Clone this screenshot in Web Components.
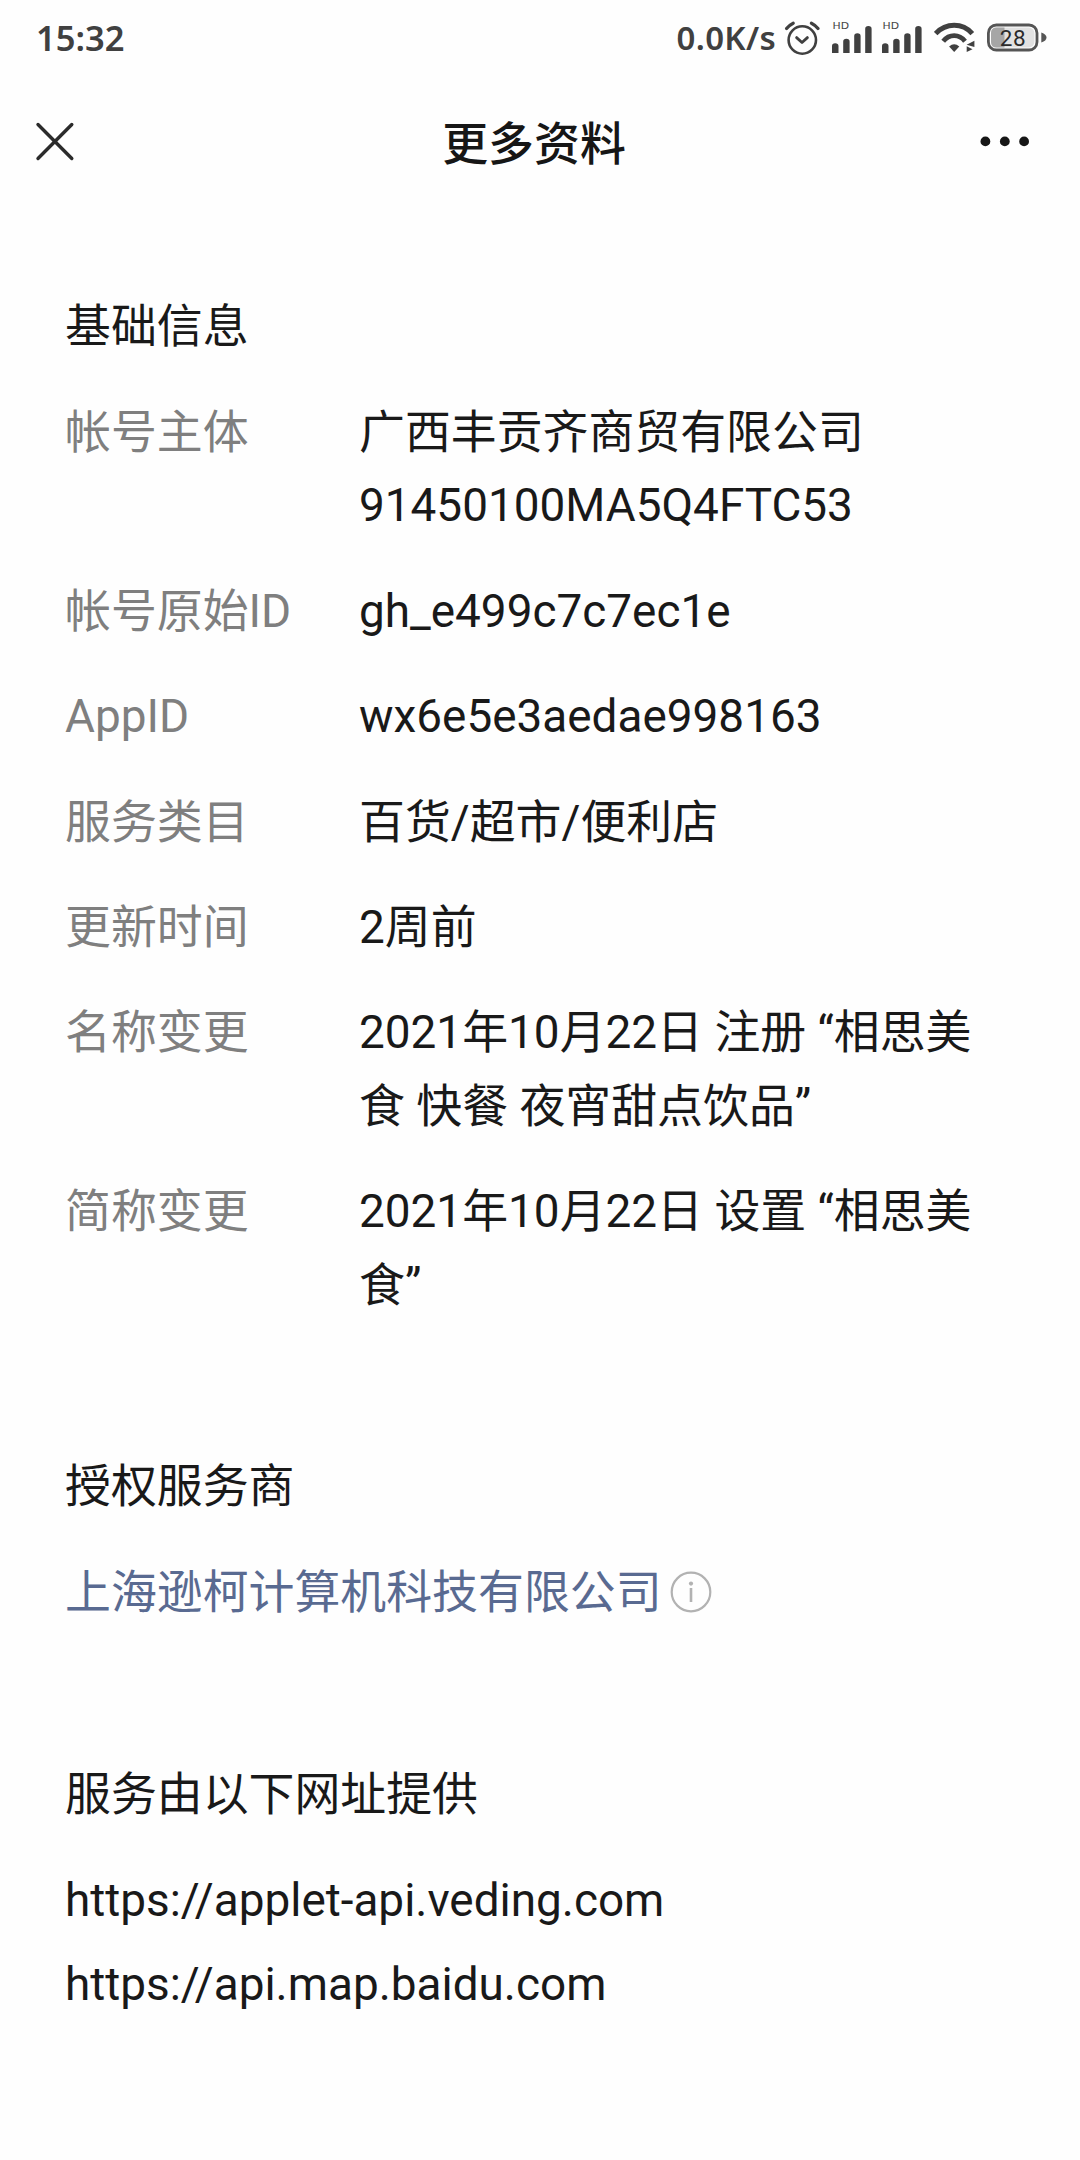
<!DOCTYPE html>
<html lang="zh-CN">
<head>
<meta charset="UTF-8">
<meta name="viewport" content="width=device-width, initial-scale=1.0">
<title>更多资料</title>
<style>
    body {
        margin: 0;
        background: #fefefe;
        color: #191919;
        font-family: Roboto, "Noto Sans CJK SC", sans-serif;
        font-size: 45.9px;
        line-height: 1.6;
    }
</style>
</head>
<body>
<profile-page>
    <status-bar time="15:32" speed="0.0K/s" battery="28"></status-bar>
    <nav-header>更多资料</nav-header>

    <info-section heading="基础信息">
        <info-row label="帐号主体">广西丰贡齐商贸有限公司<br>91450100MA5Q4FTC53</info-row>
        <info-row label="帐号原始ID">gh_e499c7c7ec1e</info-row>
        <info-row label="AppID">wx6e5e3aedae998163</info-row>
        <info-row label="服务类目">百货/超市/便利店</info-row>
        <info-row label="更新时间">2周前</info-row>
        <info-row label="名称变更">2021年10月22日 注册 “相思美食 快餐 夜宵甜点饮品”</info-row>
        <info-row label="简称变更">2021年10月22日 设置 “相思美食”</info-row>
    </info-section>

    <info-section heading="授权服务商">
        <provider-link>上海逊柯计算机科技有限公司</provider-link>
    </info-section>

    <info-section heading="服务由以下网址提供">
        <url-list>
            <div>https://applet-api.veding.com</div>
            <div>https://api.map.baidu.com</div>
        </url-list>
    </info-section>
</profile-page>

<script>
class ProfilePage extends HTMLElement {
    constructor() {
        super();
        this.attachShadow({ mode: 'open' });
        this.shadowRoot.innerHTML = `
            <style>
                :host {
                    display: flex;
                    flex-direction: column;
                    width: 1080px;
                    height: 2160px;
                    overflow: hidden;
                }
            </style>
            <slot></slot>
        `;
    }
}

class StatusBar extends HTMLElement {
    constructor() {
        super();
        this.attachShadow({ mode: 'open' });
    }

    connectedCallback() {
        this.render();
    }

    signal() {
        return `
            <svg class="signal" width="40" height="40" viewBox="0 0 40 40" fill="#404040">
                <text x="0.5" y="9.4" font-family="DejaVu Sans" font-size="8.8" font-weight="400" fill="#444" textLength="16.5" lengthAdjust="spacingAndGlyphs">HD</text>
                <path d="M0 33V26q0-2.7 3.2-2.7T6.5 26v7zM11.2 33V21.4q0-2.7 3.2-2.7t3.2 2.7V33zM22.2 33V16q0-2.7 3.2-2.7t3.2 2.7v17zM33.2 33V8.7Q33.2 6 36.4 6t3.2 2.7V33z"/>
            </svg>
        `;
    }

    render() {
        this.shadowRoot.innerHTML = `
            <style>
                :host {
                    display: flex;
                    align-items: center;
                    box-sizing: border-box;
                    height: 80px;
                    padding: 0 32px 0 36px;
                    color: #404040;
                    font-family: "Noto Sans", sans-serif;
                    font-weight: 600;
                    line-height: 40px;
                }

                .time {
                    flex: 1;
                    font-size: 34.5px;
                    margin-top: -4px;
                }

                .speed {
                    font-size: 33px;
                    letter-spacing: 0.3px;
                    margin: -4px 8px 0 0;
                }

                svg {
                    display: block;
                }

                .alarm { margin-right: 12px; }
                .signal { margin-right: 10px; }
                .wifi { margin: 0 11px 0 2px; }
            </style>

            <div class="time">${this.getAttribute('time')}</div>
            <div class="speed">${this.getAttribute('speed')}</div>

            <svg class="alarm" width="36" height="40" viewBox="0 0 36 40" fill="none" stroke="#404040" stroke-linecap="round">
                <circle cx="18.3" cy="20" r="13.7" stroke-width="2.6"/>
                <path d="M12.6 17.6l5.4 4.9 5.4-4.9" stroke-width="2.8" stroke-linejoin="round"/>
                <path d="M2.6 8.6Q5.4 5 9.2 3.2M27.4 3.2Q31.2 5 34 8.6" stroke-width="3.2"/>
            </svg>
            ${this.signal()}
            ${this.signal()}
            <svg class="wifi" width="42" height="40" viewBox="0 0 42 40" fill="#404040">
                <path d="M1.6 13.6Q9.5 5.3 20.2 5.3t18.1 8.3" fill="none" stroke="#404040" stroke-width="5"/>
                <path d="M9.2 21.3Q13.7 15.7 20.2 15.7T31 21.3" fill="none" stroke="#404040" stroke-width="4.8"/>
                <path d="M15.1 26.6q5.1-4.6 10.2 0L20.2 32z"/>
                <path d="M40.4 20.8v6.2l-7.8-2.2zM32.7 26.2l5.8 3-5.8 2.9z"/>
            </svg>
            <svg width="61" height="40" viewBox="0 0 61 40">
                <rect x="1.4" y="5" width="48.6" height="25" rx="8" fill="#fefefe" stroke="#555" stroke-width="2.8"/>
                <rect x="4" y="7.6" width="43.4" height="19.8" rx="5.5" fill="#e2e2e2"/>
                <path d="M17.5 7.6H9.5Q4 7.6 4 13.1v8.8q0 5.5 5.5 5.5h8z" fill="#a6a6a6"/>
                <text x="25.9" y="25.7" text-anchor="middle" font-family="Roboto" font-size="22.5" font-weight="400" letter-spacing="0.6" fill="#2b2b2b">${this.getAttribute('battery')}</text>
                <path d="M54.3 12.4q5.2 1.8 5.2 5.1t-5.2 5.1z" fill="#555"/>
            </svg>
        `;
    }
}

class NavHeader extends HTMLElement {
    constructor() {
        super();
        this.attachShadow({ mode: 'open' });
        this.shadowRoot.innerHTML = `
            <style>
                :host {
                    display: flex;
                    align-items: center;
                    justify-content: space-between;
                    box-sizing: border-box;
                    height: 124px;
                    padding: 0 50px 0 35px;
                    margin-bottom: 86.4px;
                    font-weight: 500;
                    color: #161616;
                }

                svg {
                    display: block;
                }

                .title {
                    margin: 5px 2px 0 0;
                }
            </style>

            <svg width="55" height="40" viewBox="0 0 55 40" stroke="#2b2b2b" stroke-width="3.4" stroke-linecap="round">
                <path d="M3 2.5l33.8 34M36.8 2.5L3 36.5"/>
            </svg>
            <div class="title"><slot></slot></div>
            <svg width="50" height="40" viewBox="0 0 50 40" fill="#161616">
                <circle cx="5.4" cy="19.4" r="4.9"/>
                <circle cx="24.8" cy="19.4" r="4.9"/>
                <circle cx="44.1" cy="19.4" r="4.9"/>
            </svg>
        `;
    }
}

class InfoSection extends HTMLElement {
    constructor() {
        super();
        this.attachShadow({ mode: 'open' });
    }

    connectedCallback() {
        this.shadowRoot.innerHTML = `
            <style>
                :host {
                    display: flex;
                    flex-direction: column;
                    gap: 32px;
                    padding: 0 65px;
                    margin-bottom: 128px;
                }
            </style>
            <div>${this.getAttribute('heading')}</div>
            <slot></slot>
        `;
    }
}

class InfoRow extends HTMLElement {
    constructor() {
        super();
        this.attachShadow({ mode: 'open' });
    }

    connectedCallback() {
        this.shadowRoot.innerHTML = `
            <style>
                :host {
                    display: flex;
                }

                .label {
                    flex: 0 0 294px;
                    color: #7f7f7f;
                }

                .value {
                    flex: 1;
                }
            </style>
            <div class="label">${this.getAttribute('label')}</div>
            <div class="value"><slot></slot></div>
        `;
    }
}

class ProviderLink extends HTMLElement {
    constructor() {
        super();
        this.attachShadow({ mode: 'open' });
        this.shadowRoot.innerHTML = `
            <style>
                :host {
                    display: flex;
                    align-items: center;
                    gap: 8.5px;
                    padding-bottom: 1px;
                    color: #596a91;
                }
            </style>
            <span><slot></slot></span>
            <svg width="42" height="42" viewBox="0 0 42 42" fill="none" stroke="#b2b2b2">
                <circle cx="21" cy="21" r="19.3" stroke-width="2.2"/>
                <path d="M21 17v14" stroke-width="2.6"/>
                <circle cx="21" cy="12.6" r="2.1" fill="#b2b2b2" stroke="none"/>
            </svg>
        `;
    }
}

class UrlList extends HTMLElement {
    constructor() {
        super();
        this.attachShadow({ mode: 'open' });
        this.shadowRoot.innerHTML = `
            <style>
                :host {
                    display: flex;
                    flex-direction: column;
                    gap: 10.6px;
                }
            </style>
            <slot></slot>
        `;
    }
}

customElements.define('profile-page', ProfilePage);
customElements.define('status-bar', StatusBar);
customElements.define('nav-header', NavHeader);
customElements.define('info-section', InfoSection);
customElements.define('info-row', InfoRow);
customElements.define('provider-link', ProviderLink);
customElements.define('url-list', UrlList);
</script>
</body>
</html>
